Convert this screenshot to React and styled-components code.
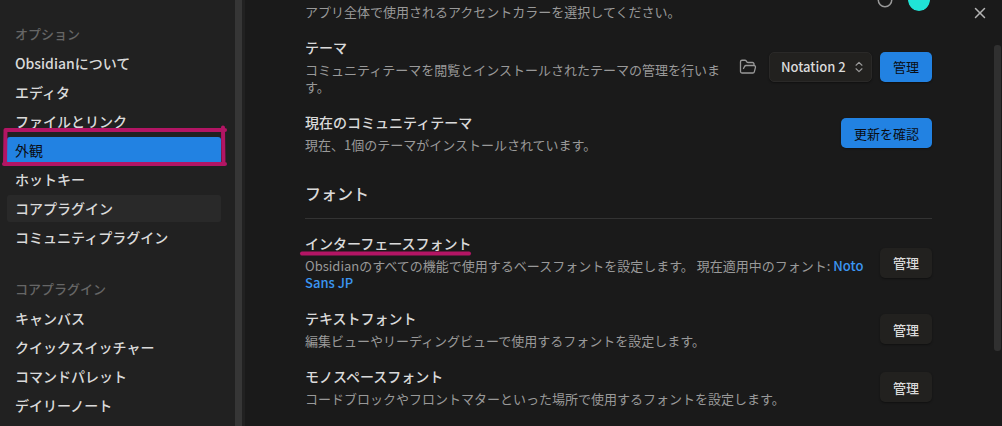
import React, { useState } from 'react';
import styled, { createGlobalStyle, css } from 'styled-components';
import { ChevronsUpDown, FolderOpen, RotateCcw, X } from 'lucide-react';

const GlobalStyle = createGlobalStyle`
  *, *::before, *::after {
    box-sizing: border-box;
  }
  body {
    margin: 0;
    background: #1a1a1a;
    color: #dadada;
    font-family: 'Noto Sans CJK JP', 'Noto Sans', sans-serif;
    font-size: 14px;
  }
  button, select, input {
    font-family: inherit;
    margin: 0;
  }
`;

const Modal = styled.div`
  display: flex;
  height: 100vh;
  overflow: hidden;
`;

const Sidebar = styled.aside`
  flex: none;
  display: flex;
  width: 245px;
  background: #212121;
`;

const SidebarScroll = styled.div`
  flex: 1;
  display: flex;
  flex-direction: column;
  gap: 28px;
  padding: 24px 14px 0 7px;
`;

const SidebarBar = styled.div`
  width: 7px;
  margin-right: 3px;
  background: #363636;
`;

const NavGroup = styled.nav`
  display: flex;
  flex-direction: column;
  gap: 2px;
`;

const NavTitle = styled.h3`
  margin: 0 0 4px;
  padding: 0 8px;
  font-size: 13px;
  font-weight: 500;
  line-height: 20px;
  color: #666;
`;

const NavItem = styled.a`
  position: relative;
  padding: 0 8px;
  border-radius: 3px;
  font-weight: 500;
  line-height: 27px;
  color: #dadada;
  text-decoration: none;
  white-space: nowrap;

  ${(p) => p.$hover && css`
    background: #292929;
  `}
  ${(p) => p.$active && css`
    background: #2282e2;
    color: #0a0d12;
    font-weight: 400;
  `}
`;

const Marker = styled.svg`
  position: absolute;
  top: ${(p) => p.$top}px;
  left: -6px;
  overflow: visible;
  fill: none;
  stroke: #b31564;
  stroke-width: 4;
  stroke-linecap: round;
  stroke-linejoin: round;
  pointer-events: none;
`;

const Main = styled.main`
  position: relative;
  flex: 1;
  min-width: 0;
  padding: 0 70px 0 60px;
`;

/* list is scrolled past the top edge */
const SettingList = styled.div`
  margin-top: -29px;
`;

const Row = styled.div`
  display: flex;
  align-items: center;
  gap: 8px;
  padding: 9px 0;
`;

const Info = styled.div`
  flex: 1;
  min-width: 0;
`;

const Name = styled.div`
  position: relative;
  width: fit-content;
  margin-bottom: 5px;
  font-weight: 500;
  line-height: 18px;
`;

const Description = styled.div`
  font-size: 13px;
  line-height: 17px;
  color: #999;
`;

const FontName = styled.span`
  font-weight: 500;
  color: #3b96f2;
`;

const Control = styled.div`
  flex: none;
  display: flex;
  align-items: center;
  gap: 8px;
`;

const Heading = styled.h2`
  margin: 19px 0 6px;
  padding-bottom: 13px;
  border-bottom: 1px solid #333;
  font-size: 16px;
  font-weight: 500;
  line-height: 24px;
`;

const Button = styled.button`
  height: 30px;
  padding: 0 13px;
  border: 0;
  border-radius: 5px;
  background: ${(p) => (p.$accent ? '#2282e2' : '#22211f')};
  color: ${(p) => (p.$accent ? '#0a0d12' : '#dadada')};
  box-shadow: 0 1px 2px rgba(0, 0, 0, 0.4);
  font-size: 13px;
  font-weight: ${(p) => (p.$accent ? 400 : 500)};
`;

const IconButton = styled.button`
  display: flex;
  padding: 4px;
  border: 0;
  background: none;
  color: #999;
`;

const CloseButton = styled(IconButton)`
  position: absolute;
  top: 0;
  right: 9px;
  color: #b3b3b3;
`;

const ColorInput = styled.input`
  width: 22px;
  height: 22px;
  margin: 0 2px;
  padding: 0;
  border: 0;
  border-radius: 50%;
  background: none;
  overflow: hidden;

  &::-webkit-color-swatch-wrapper {
    padding: 0;
  }
  &::-webkit-color-swatch {
    border: 0;
    border-radius: 50%;
  }
`;

const SelectWrap = styled.div`
  position: relative;
  display: flex;
  align-items: center;

  svg {
    position: absolute;
    right: 6px;
    color: #999;
    pointer-events: none;
  }
`;

const Select = styled.select`
  appearance: none;
  width: 103px;
  height: 30px;
  padding: 0 16px 0 11px;
  border: 1px solid #2a2928;
  border-radius: 5px;
  background: #22211f;
  color: #dadada;
  box-shadow: 0 1px 2px rgba(0, 0, 0, 0.4);
  font-size: 13px;
  font-weight: 500;
`;

const MainBar = styled.div`
  position: absolute;
  top: 45px;
  right: 1px;
  width: 7px;
  height: 306px;
  border-radius: 3px;
  background: #303030;
`;

const groups = [
  {
    title: 'オプション',
    items: [
      'Obsidianについて',
      'エディタ',
      'ファイルとリンク',
      '外観',
      'ホットキー',
      'コアプラグイン',
      'コミュニティプラグイン',
    ],
  },
  {
    title: 'コアプラグイン',
    items: ['キャンバス', 'クイックスイッチャー', 'コマンドパレット', 'デイリーノート'],
  },
];

function Setting({ name, description, marker, children }) {
  return (
    <Row>
      <Info>
        <Name>
          {name}
          {marker}
        </Name>
        <Description>{description}</Description>
      </Info>
      <Control>{children}</Control>
    </Row>
  );
}

function App() {
  const [color, setColor] = useState('#20e3d6');

  return (
    <>
      <GlobalStyle />
      <Modal>
        <Sidebar>
          <SidebarScroll>
            {groups.map((group) => (
              <NavGroup key={group.title} aria-label={group.title}>
                <NavTitle>{group.title}</NavTitle>
                {group.items.map((item) => (
                  <NavItem
                    key={item}
                    href="#"
                    $active={item === '外観'}
                    $hover={item === 'コアプラグイン'}
                  >
                    {item}
                    {item === '外観' && (
                      <Marker $top={-12} width="226" height="42" aria-hidden="true">
                        <path d="M222 2.5 L222.5 39 M224 5 L4.5 5 L4 38.5 M3 39 L224 39" />
                      </Marker>
                    )}
                  </NavItem>
                ))}
              </NavGroup>
            ))}
          </SidebarScroll>
          <SidebarBar />
        </Sidebar>

        <Main>
          <SettingList>
            <Setting
              name="アクセントカラー"
              description="アプリ全体で使用されるアクセントカラーを選択してください。"
            >
              <IconButton aria-label="リセット">
                <RotateCcw size={18} />
              </IconButton>
              <ColorInput
                type="color"
                aria-label="アクセントカラー"
                value={color}
                onChange={(e) => setColor(e.target.value)}
              />
            </Setting>
            <Setting
              name="テーマ"
              description="コミュニティテーマを閲覧とインストールされたテーマの管理を行います。"
            >
              <IconButton aria-label="フォルダを開く">
                <FolderOpen size={18} strokeWidth={1.75} />
              </IconButton>
              <SelectWrap>
                <Select aria-label="テーマ" defaultValue="Notation 2">
                  <option>Notation 2</option>
                </Select>
                <ChevronsUpDown size={14} />
              </SelectWrap>
              <Button $accent>管理</Button>
            </Setting>
            <Setting
              name="現在のコミュニティテーマ"
              description="現在、1個のテーマがインストールされています。"
            >
              <Button $accent>更新を確認</Button>
            </Setting>

            <Heading>フォント</Heading>

            <Setting
              name="インターフェースフォント"
              description={
                <>
                  Obsidianのすべての機能で使用するベースフォントを設定します。 現在適用中のフォント:{' '}
                  <FontName>Noto Sans JP</FontName>
                </>
              }
              marker={
                <Marker $top={17} width="174" height="5" aria-hidden="true">
                  <path d="M3 2.5 L170 2.5" />
                </Marker>
              }
            >
              <Button>管理</Button>
            </Setting>
            <Setting
              name="テキストフォント"
              description="編集ビューやリーディングビューで使用するフォントを設定します。"
            >
              <Button>管理</Button>
            </Setting>
            <Setting
              name="モノスペースフォント"
              description="コードブロックやフロントマターといった場所で使用するフォントを設定します。"
            >
              <Button>管理</Button>
            </Setting>
          </SettingList>
          <CloseButton aria-label="閉じる">
            <X size={18} />
          </CloseButton>
          <MainBar />
        </Main>
      </Modal>
    </>
  );
}

export default App;
